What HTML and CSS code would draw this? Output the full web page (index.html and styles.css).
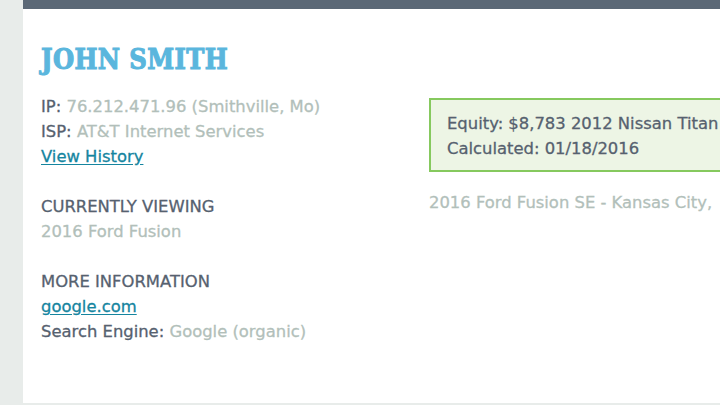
FILE: index.html
```html
<!DOCTYPE html>
<html lang="en">
<head>
    <meta charset="UTF-8">
    <meta name="viewport" content="width=device-width, initial-scale=1.0">
    <title>Visitor Details</title>
    <link rel="stylesheet" href="styles.css">
</head>
<body>
    <div class="panel">
        <h1 class="visitor-name">John Smith</h1>

        <div class="columns">
            <div class="details">
                <div class="group">
                    <div><span class="label">IP:</span> <span class="value">76.212.471.96 (Smithville, Mo)</span></div>
                    <div><span class="label">ISP:</span> <span class="value">AT&amp;T Internet Services</span></div>
                    <div><a href="#" class="link">View History</a></div>
                </div>

                <div class="group">
                    <div class="heading">Currently Viewing</div>
                    <div class="value">2016 Ford Fusion</div>
                </div>

                <div class="group">
                    <div class="heading">More Information</div>
                    <div><a href="#" class="link">google.com</a></div>
                    <div><span class="label">Search Engine:</span> <span class="value">Google (organic)</span></div>
                </div>
            </div>

            <div class="trade-in">
                <div class="equity-box">
                    <div>Equity: $8,783 2012 Nissan Titan</div>
                    <div>Calculated: 01/18/2016</div>
                </div>
                <div class="value">2016 Ford Fusion SE - Kansas City,</div>
            </div>
        </div>
    </div>
</body>
</html>
```

FILE: styles.css
```css
html, body {
    margin: 0;
    overflow: hidden;
}
body {
    font-family: "DejaVu Sans", "Open Sans", sans-serif;
    font-size: 16.4px;
    line-height: 25px;
    -webkit-text-stroke: 0.3px;
    background-color: #e8ecea;
    color: #56616f;
}
.panel {
    margin-left: 23px;
    height: 403px;
    box-sizing: border-box;
    background-color: white;
    border-top: 9px solid #5b6876;
    padding: 34px 0 0 18px;
}
.visitor-name {
    font-family: "DejaVu Serif Condensed", "DejaVu Serif", serif;
    font-stretch: condensed;
    font-size: 27px;
    line-height: 34px;
    font-weight: bold;
    letter-spacing: 0.4px;
    -webkit-text-stroke: 1px #5ab6dd;
    text-transform: uppercase;
    color: #5ab6dd;
    margin: 0 0 17px 0;
}
.columns {
    display: grid;
    grid-template-columns: 388px 1fr;
}
.group {
    margin-bottom: 25px;
}
.label {
    color: #56616f;
}
.value {
    color: #b2bfba;
}
.link {
    color: #15859f;
    text-decoration: underline;
    text-underline-offset: 2px;
}
.heading {
    text-transform: uppercase;
    color: #56616f;
}
.trade-in {
    margin-top: 4px;
    white-space: nowrap;
}
.equity-box {
    width: 400px;
    background-color: #edf5e5;
    border: 2px solid #86c95e;
    padding: 11px 16px 9px;
    margin-bottom: 18px;
}
```
